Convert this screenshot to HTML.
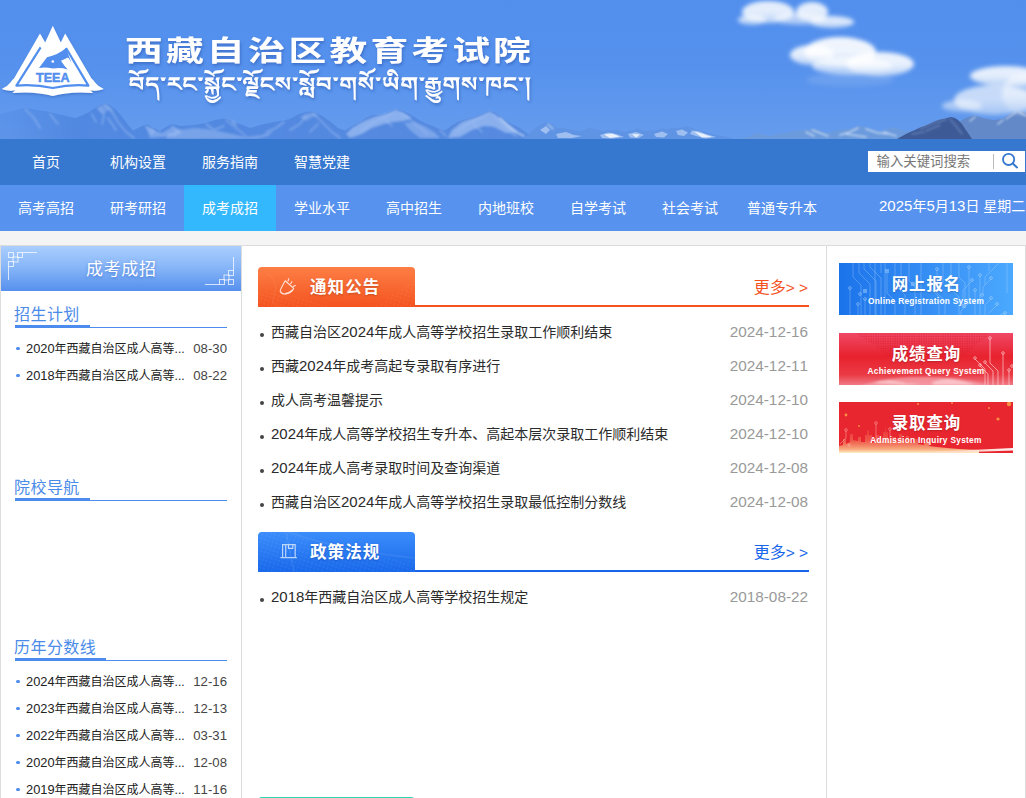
<!DOCTYPE html>
<html lang="zh-CN">
<head>
<meta charset="utf-8">
<title>成考成招 - 西藏自治区教育考试院</title>
<style>
*{margin:0;padding:0;box-sizing:border-box;}
html,body{width:1026px;height:798px;overflow:hidden;background:#f4f4f4;}
body{font-family:"Liberation Sans","Noto Sans CJK SC",sans-serif;font-size:14px;color:#222;position:relative;}
a{color:inherit;text-decoration:none;}
ul{list-style:none;}
/* banner */
#banner{position:absolute;left:0;top:0;width:1026px;height:139px;background:#528fed;overflow:hidden;}
#banner svg.bg{position:absolute;left:0;top:0;}
#logo{position:absolute;left:0;top:0;}
#ttl{position:absolute;left:120px;top:22px;}
#title{position:absolute;left:126px;top:27px;height:40px;line-height:40px;font-size:31px;font-weight:700;color:#fff;letter-spacing:9.5px;white-space:nowrap;font-family:"Liberation Serif","Noto Serif CJK SC",serif;text-shadow:1px 2px 3px rgba(40,80,160,.55);transform-origin:0 50%;}
#tib{position:absolute;left:128px;top:66px;height:34px;line-height:34px;font-size:24px;color:#fff;white-space:nowrap;font-family:"Liberation Sans","Noto Serif Tibetan","Jomolhari",sans-serif;text-shadow:1px 2px 3px rgba(40,80,160,.5);transform-origin:0 50%;}
/* nav */
#nav1{position:absolute;left:0;top:139px;width:1026px;height:46px;background:#3678d0;}
#nav2{position:absolute;left:0;top:185px;width:1026px;height:46px;background:#5692ee;}
.nav a{float:left;width:92px;height:46px;line-height:46px;text-align:center;color:#fff;font-size:14px;}
#nav2 a.on{background:#33b8fd;}
#search{position:absolute;left:868px;top:12px;width:157px;height:21px;background:#fff;}
#search span{position:absolute;left:8.5px;top:0;line-height:22px;font-size:13.4px;color:#777;}
#search i{position:absolute;left:125px;top:3px;width:1px;height:15px;background:#bbb;}
#search svg{position:absolute;left:131px;top:0;}
#date{position:absolute;left:879px;top:0;line-height:42px;font-size:14px;color:#fff;white-space:nowrap;}
#date .n{font-size:15px;}
/* columns */
#left{position:absolute;left:0;top:245px;width:242px;height:560px;background:#fff;border:1px solid #dcdcdc;border-bottom:0;}
#mid{position:absolute;left:242px;top:245px;width:585px;height:560px;background:#fff;border-right:1px solid #dcdcdc;border-top:1px solid #dcdcdc;}
#right{position:absolute;left:827px;top:245px;width:199px;height:560px;background:#fff;border-top:1px solid #dcdcdc;border-right:1px solid #dcdcdc;}

/* left */
#lhead{position:absolute;left:0;top:0;width:240px;height:45px;background:linear-gradient(#aacefe,#89b7f8 45%,#5690ee);text-align:center;line-height:47px;font-size:17px;color:#fff;text-shadow:0 1px 3px rgba(40,90,190,.55);letter-spacing:.6px;text-indent:.6px;}
#lhead svg{position:absolute;left:0;top:0;}
#lhead span{position:relative;}
.lsec{position:absolute;left:14px;width:212px;}
.lsec h3{height:23px;border-bottom:1px solid #4c8cee;font-weight:400;font-size:16px;line-height:19px;color:#4b8be8;position:relative;letter-spacing:.45px;}
.lsec h3 span{display:inline-block;text-indent:-1px;height:23px;border-bottom:3px solid #4c8cee;padding-right:10px;}
.lsec li{height:27px;line-height:27px;font-size:12px;color:#222;position:relative;padding-left:11px;white-space:nowrap;}
.lsec li:before{content:"";position:absolute;left:1.2px;top:11.8px;width:3.6px;height:3.6px;border-radius:50%;background:#4c8cee;}
.lsec li b{font-weight:400;position:absolute;right:0;top:0;color:#444;font-size:13.2px;}
.n{font-size:1.07em;font-kerning:none;}
/* mid */
.sec{position:absolute;left:16px;width:551px;}
.sec .hd{height:40px;border-bottom:2px solid;position:relative;}
.sec .tab{position:absolute;left:0;top:0;width:157px;height:40px;border-radius:4px 4px 0 0;color:#fff;font-weight:700;font-size:16.5px;line-height:40px;padding-left:52px;letter-spacing:1.1px;text-shadow:0 1px 2px rgba(120,40,0,.35);overflow:hidden;}
.sec .tab svg{position:absolute;left:0;top:0;}
.sec .tab span{position:relative;}
.sec .more{position:absolute;right:1px;top:11px;white-space:nowrap;font-size:16px;line-height:20px;}
.sec .more i{font-style:normal;letter-spacing:4.2px;font-size:15.5px;margin-left:0;margin-right:-4.2px;}
.sec ul{padding-top:8px;}
.sec li{height:34px;line-height:34px;font-size:14px;color:#2b2b2b;position:relative;padding-left:13px;white-space:nowrap;}
.sec li:before{content:"";position:absolute;left:2px;top:18px;width:4px;height:4px;border-radius:50%;background:#444;}
.sec li b{font-weight:400;position:absolute;right:1px;top:0;color:#999;font-size:15.3px;font-kerning:none;}
.or .hd{border-color:#f4511e;} .or .tab{background:linear-gradient(#fd7e45,#f4531f);} .or .more{color:#f4511e;}
.bl .hd{border-color:#1766ea;} .bl .tab{background:linear-gradient(#3c8dfb,#1868ea);text-shadow:0 1px 2px rgba(0,40,140,.4);} .bl .more{color:#1766ea;}
.gr .tab{background:#2fd6b5;}
/* right */
.btn{position:absolute;left:12px;width:174px;height:52px;overflow:hidden;color:#fff;text-align:center;}
.btn svg{position:absolute;left:0;top:0;}
.btn p{position:relative;font-weight:700;font-size:16.5px;line-height:20px;padding-top:11px;letter-spacing:.9px;text-indent:.9px;text-shadow:0 1px 2px rgba(0,0,0,.2);}
.btn span{position:relative;display:block;font-weight:700;font-size:8.3px;line-height:10px;margin-top:2px;letter-spacing:.3px;white-space:nowrap;}
</style>
</head>
<body>
<div id="banner">
<svg class="bg" width="1026" height="139" viewBox="0 0 1026 139">
<defs>
<linearGradient id="sky" x1="0" y1="0" x2="0" y2="1"><stop offset="0" stop-color="#528fed"/><stop offset=".45" stop-color="#5591ed"/><stop offset=".8" stop-color="#5f98ed"/><stop offset="1" stop-color="#669ced"/></linearGradient>
<linearGradient id="lm" x1="0" y1="0" x2="1" y2="0"><stop offset="0" stop-color="#5189e2" stop-opacity=".35"/><stop offset=".14" stop-color="#4d84dd" stop-opacity=".8"/><stop offset="1" stop-color="#5689df" stop-opacity=".95"/></linearGradient>
<linearGradient id="cg" x1="0" y1="0" x2="0" y2="1"><stop offset="0" stop-color="#fff"/><stop offset=".5" stop-color="#fdfeff"/><stop offset="1" stop-color="#c4d9f7"/></linearGradient>
<filter id="b1" x="-20%" y="-40%" width="140%" height="180%"><feGaussianBlur stdDeviation="2.2"/></filter>
<filter id="b2" x="-5%" y="-20%" width="110%" height="140%"><feGaussianBlur stdDeviation="0.6"/></filter>
<filter id="b4" x="-5%" y="-20%" width="110%" height="140%"><feGaussianBlur stdDeviation="1.1"/></filter>
</defs>
<rect width="1026" height="139" fill="url(#sky)"/>
<g filter="url(#b2)">
<path d="M0 139 L0 114 L12 111 L25 107.7 L38 110 L50 112 L62 115 L75 118 L83 115 L90 111.5 L98 106 L105 102.7 L110 105 L115 109 L120 114 L125 120.4 L129 126 L133 130.5 L140 127 L147 124 L154 128 L160 131 L166 127 L172 124 L181 126 L190 125.5 L198 124.5 L205 123 L215 120 L225 118.4 L232 121 L240 124 L250 128 L262 124.5 L275 121.7 L283 120.5 L290 119 L297 115 L303 112.8 L308 111.7 L313 111.5 L319 114 L325 118 L332 123 L338 128 L345 130.5 L352 126 L360 121.7 L366 118 L372 115.3 L378 114.8 L385 114 L391 111 L397 109 L403 111 L410 114 L416 118 L422 121.7 L430 125 L437 128 L445 130.5 L451 126 L458 121.7 L464 119.5 L470 118 L476 116 L482 114 L486 112 L490 110.8 L495 112.5 L500 116 L505 119.5 L510 123 L515 125.5 L520 128 L524 131 L528 134.3 L533 139 Z" fill="url(#lm)"/>
<path d="M524 139 L528 134.3 L533 130 L537 127 L541 124.5 L545 122.6 L549 122.4 L553 124.5 L556 127.5 L560 128.5 L564 127.5 L567 129 L572 129.5 L576 131 L580 131.8 L584 130 L588 128.3 L591 127.6 L594 129 L598 129.8 L601 131 L605 131 L609 129.8 L613 130.4 L617 129.6 L621 131.2 L626 132 L630 130.8 L634 130 L637 128 L639 129.3 L643 130.5 L647 131.2 L651 130.2 L655 130.6 L659 129 L663 128.2 L667 129.4 L671 128.2 L675 127.4 L679 128.2 L683 127 L687 126.6 L691 127.6 L695 129 L699 130.2 L704 131.8 L709 133 L714 134.2 L720 135.8 L726 136.8 L730 137.8 L735 139 Z" fill="#5f93e4"/>
<path d="M738 139 L747 137.4 L752 135 L757 133 L763 134.5 L770 136 L778 134 L785 133 L792 131.5 L800 130 L808 129.2 L815 128.7 L821 131 L827 133 L833 131.5 L838 130 L844 129.2 L850 128.7 L855 127 L860 125.7 L865 127 L870 128.7 L875 130 L880 131.6 L887 129 L893 127 L897 128.5 L905 131 L1026 131 L1026 139 Z" fill="#6c9bdd"/>
<path d="M955 139 L955 123 L960 121.3 L964 119 L968 117 L972 116 L975 115.5 L980 117 L985 118.4 L990 119.5 L995 120 L999 119.2 L1003 118.4 L1007 116 L1010 114 L1014 112 L1017 110.5 L1021 111.2 L1026 112.6 L1026 139 Z" fill="#6489c8"/>
<path d="M897 139 L905 134.5 L910 132 L915 130 L920 127.5 L925 125.7 L930 123.5 L935 121.3 L940 119.5 L945 118.4 L951 117 L955 118 L958 120 L962 124 L965 128.7 L968 133 L972 139 Z" fill="#3c5a97"/>
</g>
<g filter="url(#b4)" fill="#a9c6f6" fill-opacity=".62">
<path d="M168 134 L180 130 L194 128 L206 129 L218 131 L232 134 L246 137 L262 135 L274 130 L268 136 L256 139 H166Z" fill-opacity=".42"/><path d="M230 120 L234 121 L238 126 L234 125Z M150 126 L156 132 L152 133Z" fill-opacity=".5"/>
<path d="M146 126 L154 130 L162 133 L172 127 L182 130 L176 136 L150 138Z" fill-opacity=".45"/>
<path d="M352 128 L362 122 L374 117 L388 113 L396 110.5 L404 113 L412 118 L404 121 L394 122 L384 124 L372 128 L362 134 L350 138 L346 134Z"/>
<path d="M404 123 L414 122 L424 126 L434 132 L440 138 L420 138 L410 130Z" fill-opacity=".45"/>
<path d="M452 130 L462 122 L474 118 L484 114.5 L490 112 L496 115 L504 121 L512 127 L518 132 L506 133 L494 127 L484 126 L472 130 L460 137 L448 138Z"/>
<path d="M300 117 L308 113.5 L314 113 L318 116 L312 117 L306 121Z" fill-opacity=".4"/>
<path d="M96 108 L104 104 L110 107 L114 112 L108 110 L104 114 L100 112Z" fill-opacity=".35"/>
</g>
<g filter="url(#b2)" fill="#d4e3fa" fill-opacity=".8"><path d="M556 134 L566 132 L574 135 L582 136 L572 138 L558 138Z M600 135 L608 132.5 L616 134 L624 137 L612 138.5 L602 138Z M628 134 L636 132 L644 135 L638 138 L630 137.5Z M654 134 L662 131.5 L668 134 L664 137.5 L656 137Z M676 131 L682 129.5 L688 132.5 L684 136 L678 135Z M692 130.5 L698 131 L706 134 L716 137 L706 138.5 L696 136 L690 134Z M540 130 L546 126 L550 130 L546 134Z" fill-opacity=".55"/><path d="M604 134.5 L612 133.5 L620 136.5 L610 138Z M694 131.5 L702 133.5 L712 137 L702 137.5Z M632 134 L640 134.5 L636 137.5Z" fill="#f0f6fe" fill-opacity=".9"/></g>
<g filter="url(#b4)" fill="none" stroke-linecap="round">
<g stroke="#9dbef4" stroke-opacity=".55" stroke-width="1.6">
<path d="M105 104 L112 112 L118 122 L126 132 L134 138M100 108 L104 116 L102 124M108 118 L116 130M92 114 L96 122M25 109 L34 118 L40 128M50 114 L58 124M146 126 L152 134M172 126 L180 134M206 124 L214 130 L224 126M226 120 L236 128 L246 136"/>
<path d="M313 113 L322 122 L332 132 L340 138M306 116 L300 124 L290 130M318 124 L310 132M284 122 L276 128 L266 132M397 110 L388 116 L374 122 L362 130M399 112 L408 118 L418 126 L428 134M384 118 L392 126M490 112 L480 118 L468 124 L456 132M492 114 L500 122 L508 130 L516 136M474 124 L482 132M440 130 L446 136"/>
</g>
<g stroke="#dbe8fb" stroke-opacity=".7" stroke-width="1.5">
<path d="M500 118 L508 126 L516 132 L524 136M548 124.5 L553 129"/>
<path d="M812 130 L820 133 L828 136M806 132 L814 136M858 128 L850 132 L840 135M866 129 L878 133 L890 134M884 132 L896 136M846 134 L866 137"/>
<path d="M1017 111 L1012 115 L1006 119M1019 112 L1026 116M975 117 L970 121M1003 120 L998 124"/>
</g>
<path d="M920 129 L934 123 L946 119.5M926 131 L940 125M950 119 L956 126 L962 134M912 134 L924 132" stroke="#7f9acb" stroke-opacity=".55" stroke-width="1.4"/>
</g>
<g filter="url(#b1)" fill="url(#cg)">
<ellipse cx="768" cy="12" rx="26" ry="11" opacity=".85"/>
<ellipse cx="752" cy="20" rx="14" ry="5" opacity=".7"/>
<ellipse cx="812" cy="12" rx="16" ry="10" opacity=".85"/>
<ellipse cx="832" cy="22" rx="22" ry="6" opacity=".8"/>
<ellipse cx="800" cy="19" rx="26" ry="6" opacity=".6"/>
<ellipse cx="840" cy="52" rx="36" ry="15" opacity=".92"/>
<ellipse cx="812" cy="55" rx="22" ry="10" opacity=".85"/>
<ellipse cx="880" cy="64" rx="34" ry="12" opacity=".88"/>
<ellipse cx="852" cy="66" rx="40" ry="9" opacity=".7"/>
<ellipse cx="850" cy="80" rx="44" ry="7" opacity=".12"/>
<ellipse cx="1006" cy="76" rx="36" ry="10" opacity=".85"/>
<ellipse cx="994" cy="100" rx="40" ry="15" opacity=".66"/>
<ellipse cx="962" cy="106" rx="20" ry="6" opacity=".5"/>
<ellipse cx="1022" cy="94" rx="20" ry="20" opacity=".5"/>
</g>
</svg>
<svg id="logo" width="110" height="105" viewBox="0 0 110 105">
<defs><filter id="ls" x="-10%" y="-10%" width="120%" height="130%"><feDropShadow dx="0.5" dy="1.5" stdDeviation="1.2" flood-color="#2d5fb8" flood-opacity=".55"/></filter></defs>
<g filter="url(#ls)">
<path d="M1.7 89 Q7 87 10.5 82.5 Q12 80 14 78.5 L40 33.6 L45.2 42.5 L52.8 25.7 L60.8 42.5 L65.2 33.6 L91.5 78.5 Q93.5 80 95 82.5 Q98.5 87 103.8 89 Q98 91.4 92.5 90.6 L13 90.6 Q7.5 91.4 1.7 89 Z" fill="#fff"/>
<path d="M12.4 93 L17.5 88.2 Q36 86.4 52.8 90.2 Q70 86.4 88 88.2 L93.2 93 Q70 91 52.8 96 Q35 91 12.4 93 Z" fill="#fff"/>
</g>
<path d="M40.6 47.4 L16.4 85.6 Q35 84.2 52.8 88 Q70 84.2 88.4 85.6 L66 48" fill="none" stroke="#518eed" stroke-width="2.2" stroke-linejoin="round"/>
<path d="M66 48 Q58 55 47 57.2 L39 68 Q46 67 52.8 68.6 Q60 67 67.6 69.4 L61.5 61.5 L68.5 58 L71.5 63 Z" fill="#518eed"/>
<path d="M61 60.8 L68 57.4 L71.5 63.5 L66 67.5 Z" fill="#fff"/>
<circle cx="52.8" cy="61.5" r="1.3" fill="#fff"/>
<text x="36" y="81.6" textLength="33.5" lengthAdjust="spacingAndGlyphs" font-family="'Liberation Sans',sans-serif" font-weight="700" font-size="12" fill="#518eed" stroke="#518eed" stroke-width=".45">TEEA</text>
</svg>
<svg id="ttl" width="430" height="90" viewBox="0 0 430 90">
<defs><filter id="ts" x="-5%" y="-20%" width="110%" height="150%"><feDropShadow dx="1" dy="2" stdDeviation="1.5" flood-color="#2a58b0" flood-opacity=".6"/></filter></defs>
<g filter="url(#ts)" fill="#fff">
<text x="5" y="39" textLength="409" lengthAdjust="spacingAndGlyphs" letter-spacing="2.4" font-family="'Liberation Sans','Noto Sans CJK SC',sans-serif" font-weight="700" font-size="28.5">西藏自治区教育考试院</text>
<text x="8.5" y="69" textLength="403" lengthAdjust="spacingAndGlyphs" font-family="'Liberation Sans','Noto Serif Tibetan','Jomolhari',sans-serif" font-weight="700" font-size="20">བོད་རང་སྐྱོང་ལྗོངས་སློབ་གསོ་ཡིག་རྒྱུགས་ཁང་།</text>
</g>
</svg>
</div>
<div id="nav1" class="nav">
  <a>首页</a><a>机构设置</a><a>服务指南</a><a>智慧党建</a>
  <div id="search"><span>输入关键词搜索</span><i></i>
    <svg width="22" height="20" viewBox="0 0 22 20"><circle cx="9.6" cy="8.4" r="5.6" fill="none" stroke="#3678d0" stroke-width="1.8"/><path d="M13.8 12.6 L18 16.4" stroke="#3678d0" stroke-width="2" stroke-linecap="round"/></svg>
  </div>
</div>
<div id="nav2" class="nav">
  <a>高考高招</a><a>研考研招</a><a class="on">成考成招</a><a>学业水平</a><a>高中招生</a><a>内地班校</a><a>自学考试</a><a>社会考试</a><a>普通专升本</a>
  <div id="date"><span class="n">2025</span>年<span class="n">5</span>月<span class="n">13</span>日 星期二</div>
</div>
<div id="left">
  <div id="lhead"><svg width="240" height="45" viewBox="0 1 240 45"><g id="orn" fill="none" stroke="#fff" stroke-opacity=".72" stroke-width="1"><rect x="7.5" y="7.5" width="5" height="5"/><rect x="16.5" y="7.5" width="5" height="5"/><rect x="12" y="12" width="5" height="5"/><rect x="7.5" y="16.5" width="5" height="5"/><path d="M21.5 7.5H36M7.5 21.5V35"/></g><use href="#orn" transform="rotate(180 120 23.5)"/></svg><span>成考成招</span></div>
  <div class="lsec" style="top:59px"><h3><span>招生计划</span></h3>
    <ul style="padding-top:7px"><li><span class="n">2020</span>年西藏自治区成人高等...<b class="n">08-30</b></li><li><span class="n">2018</span>年西藏自治区成人高等...<b class="n">08-22</b></li></ul>
  </div>
  <div class="lsec" style="top:232px"><h3><span>院校导航</span></h3></div>
  <div class="lsec" style="top:392px"><h3><span>历年分数线</span></h3>
    <ul style="padding-top:7px"><li><span class="n">2024</span>年西藏自治区成人高等...<b class="n">12-16</b></li><li><span class="n">2023</span>年西藏自治区成人高等...<b class="n">12-13</b></li><li><span class="n">2022</span>年西藏自治区成人高等...<b class="n">03-31</b></li><li><span class="n">2020</span>年西藏自治区成人高等...<b class="n">12-08</b></li><li><span class="n">2019</span>年西藏自治区成人高等...<b class="n">11-16</b></li></ul>
  </div>
</div>
<div id="mid">
  <div class="sec or" style="top:21px">
    <div class="hd"><div class="tab"><svg width="157" height="40" viewBox="0 0 157 40"><defs><pattern id="dpo" width="4" height="4" patternUnits="userSpaceOnUse" patternTransform="rotate(18)"><circle cx="1" cy="1" r=".55" fill="#fff" fill-opacity=".22"/></pattern></defs><path d="M0 24 Q30 26 52 34 T90 40 H0Z" fill="url(#dpo)"/><path d="M157 14 Q140 22 128 32 T104 40 H157Z" fill="url(#dpo)"/><path d="M8 6 Q22 14 16 28 T30 40" fill="none" stroke="#fff" stroke-opacity=".07" stroke-width="1"/><g fill="none" stroke="#fff" stroke-opacity=".8" stroke-width="1.15" stroke-linecap="round" stroke-linejoin="round"><path d="M27.2 13.8 L35.7 21.4 Q33.6 25.4 28.6 26.8 Q24 27.7 22.2 24.4 Q21.8 23.2 27.2 13.8 Z"/><path d="M30 14 L30.8 11.7 M32.7 16.7 L33.9 14.7 M35.1 19.5 L37.3 18.4"/><path d="M27.5 26.6 Q31.5 26.2 34 23.4" stroke-width="1.8" stroke-opacity=".55"/></g></svg><span>通知公告</span></div><a class="more">更多<i>&gt;&gt;</i></a></div>
    <ul>
      <li>西藏自治区<span class="n">2024</span>年成人高等学校招生录取工作顺利结束<b>2024-12-16</b></li>
      <li>西藏<span class="n">2024</span>年成考高起专录取有序进行<b>2024-12-11</b></li>
      <li>成人高考温馨提示<b>2024-12-10</b></li>
      <li><span class="n">2024</span>年成人高等学校招生专升本、高起本层次录取工作顺利结束<b>2024-12-10</b></li>
      <li><span class="n">2024</span>年成人高考录取时间及查询渠道<b>2024-12-08</b></li>
      <li>西藏自治区<span class="n">2024</span>年成人高等学校招生录取最低控制分数线<b>2024-12-08</b></li>
    </ul>
  </div>
  <div class="sec bl" style="top:286px">
    <div class="hd"><div class="tab"><svg width="157" height="40" viewBox="0 0 157 40"><defs><pattern id="dpb" width="4" height="4" patternUnits="userSpaceOnUse" patternTransform="rotate(18)"><circle cx="1" cy="1" r=".55" fill="#fff" fill-opacity=".22"/></pattern></defs><path d="M0 0 H40 Q60 20 90 22 T157 30 V40 H0Z" fill="url(#dpb)"/><path d="M28 0 L36 40 M30 0 Q80 18 157 26" fill="none" stroke="#fff" stroke-opacity=".08" stroke-width="1.5"/><g fill="none" stroke="#fff" stroke-opacity=".68" stroke-width="1.2"><path d="M24.6 25.6 V12.6 H37.2 V25.6 M22.4 25.6 H38.8 M27.7 12.6 V25.6 M30.5 12.6 V16.4 H34.8 V12.6"/></g></svg><span>政策法规</span></div><a class="more">更多<i>&gt;&gt;</i></a></div>
    <ul>
      <li><span class="n">2018</span>年西藏自治区成人高等学校招生规定<b>2018-08-22</b></li>
    </ul>
  </div>
  <div class="sec gr" style="top:551px">
    <div class="hd" style="border:0"><div class="tab"></div></div>
  </div>
</div>
<div id="right">
  <a class="btn" style="top:17px;background:linear-gradient(90deg,#1b73ea,#3a93f6 60%,#4ba9fe)"><svg width="174" height="52" viewBox="0 0 174 52"><g fill="none" stroke="#bfe0ff" stroke-opacity=".34" stroke-width=".9"><path d="M11 52V26M14 0V14l8 8v30M19 52V42M20 0V10l11 11v31M25 0V6l12 12v34M26 36V52M31 0V4l11 11v37M36 0V52M42 0V10M46 0V52M48 10V30l8 8v14M56 0V22l10 10v20M62 0V14M70 0V18l6 6v28M82 0V52M90 24l10 10v18M98 7V30l8 8v14M104 0V20M112 0V26l8 8v18M120 0V14l6 6v23M130 5V40l-8 8v4M136 28V52M141 13V52M133 18l-9 9v10M152 16l-8 8v8M152 36l-6 6v10M158 42l-8 8M166 50l-5 2M160 0l-14 14V22M150 0V8M168 0V30"/><g fill="#9fd0ff" fill-opacity=".5" stroke="none"><rect x="46" y="6" width="4" height="4"/><rect x="24" y="26" width="4" height="4"/><rect x="72" y="19" width="4" height="4"/><rect x="123" y="41" width="4" height="4"/></g><g stroke-opacity=".5"><circle cx="11" cy="25" r="1.4"/><circle cx="21" cy="31" r="1.4"/><circle cx="26" cy="36" r="1.4"/><circle cx="19" cy="41" r="1.4"/><circle cx="98" cy="6" r="1.4"/><circle cx="130" cy="4" r="1.4"/><circle cx="141" cy="12" r="1.4"/><circle cx="133" cy="17" r="1.4"/><circle cx="152" cy="15" r="1.4"/><circle cx="136" cy="27" r="1.4"/><circle cx="143" cy="32" r="1.4"/><circle cx="152" cy="35" r="1.4"/><circle cx="158" cy="41" r="1.4"/><circle cx="166" cy="50" r="1.4"/></g></g></svg><p>网上报名</p><span>Online Registration System</span></a>
  <a class="btn" style="top:87px;background:linear-gradient(#ef4866,#e8222e 45%,#ea3a44 80%,#f07a86)"><svg width="174" height="52" viewBox="0 0 174 52"><defs><pattern id="dpr" width="2.4" height="2.4" patternUnits="userSpaceOnUse"><circle cx="1" cy="1" r=".7" fill="#d8101c" fill-opacity=".55"/></pattern><filter id="gb" x="-10%" y="-50%" width="120%" height="200%"><feGaussianBlur stdDeviation="1"/></filter></defs>
<path d="M18 0 H150 L146 6 L138 10 L132 18 L124 22 L118 16 L110 20 L104 14 L96 18 L86 12 L78 18 L70 24 L60 20 L52 26 L44 20 L36 12 L28 8 L22 4 Z" fill="url(#dpr)"/>
<g filter="url(#gb)"><ellipse cx="86" cy="62" rx="74" ry="18" fill="#f6a3ab" fill-opacity=".7"/><path d="M34 50 Q44 46 56 48 T72 52 Z M92 50 Q104 44 118 47 T136 52 H96 Z M60 52 Q70 49 82 51" fill="#fbd3d6" fill-opacity=".75"/></g>
<g fill="none" stroke="#ffd9dc" stroke-opacity=".7" stroke-width=".9"><path d="M151 6V30l8 8v14M164 21V52M136 26l10 10v16M146 30l8 8v14M141 33l8 8v11M170 38V52"/><circle cx="151" cy="5" r="1.3"/><circle cx="164" cy="20" r="1.3"/><circle cx="136" cy="25" r="1.3"/><circle cx="146" cy="29" r="1.3"/><circle cx="141" cy="32" r="1.3"/><circle cx="170" cy="37" r="1.3"/><circle cx="173" cy="33" r="1.3"/></g></svg><p>成绩查询</p><span>Achievement Query System</span></a>
  <a class="btn" style="top:156px;height:51px;background:#e8262f"><svg width="174" height="51" viewBox="0 0 174 51"><defs><linearGradient id="sk" x1="0" y1="0" x2="0" y2="1"><stop offset="0" stop-color="#f79a6a" stop-opacity=".05"/><stop offset=".55" stop-color="#f9a876" stop-opacity=".4"/><stop offset=".85" stop-color="#fcc890" stop-opacity=".8"/><stop offset="1" stop-color="#fff0c8" stop-opacity="1"/></linearGradient><linearGradient id="st" x1="0" y1="0" x2="1" y2="0"><stop offset="0" stop-color="#ffe9c0" stop-opacity=".9"/><stop offset=".5" stop-color="#ffd9c8" stop-opacity=".85"/><stop offset="1" stop-color="#fff" stop-opacity=".95"/></linearGradient><filter id="gb3" x="-10%" y="-50%" width="120%" height="200%"><feGaussianBlur stdDeviation=".7"/></filter></defs>
<g filter="url(#gb3)"><path d="M0 51V44l4-1v-6h3v5l4-2v-8h3v6l5 1v-4h3v5h4v-7h2v-5h2v5h3v8l4-1v-7h3v5l4 1v-9h2v-6h1v6h2v9l4 1v-5h4v5h3v-8h3v7l4 1v-6h3v6l5 1v-4h4v5l6 1v-3h5v4l8 1 10 1 12 1 20 1V51Z" fill="url(#sk)"/><path d="M70 51 Q120 48.5 174 46 V48.5 Q130 50 96 51Z" fill="url(#st)"/></g>
<g fill="none" stroke="#ffc9c0" stroke-opacity=".55" stroke-width=".8"><path d="M7 29V36l-6 6M37 22V40M51 28V42"/><circle cx="7" cy="28" r="1.3"/><circle cx="37" cy="21" r="1.3"/><circle cx="51" cy="27" r="1.3"/><circle cx="10" cy="43" r="1.2"/></g>
<g fill="#ffb347" fill-opacity=".75"><circle cx="170" cy="2" r="2.2"/><circle cx="159" cy="17" r="1.6"/><circle cx="150" cy="6" r="1"/><circle cx="7" cy="13" r="1.4"/><circle cx="79" cy="2" r="1"/><circle cx="113" cy="1" r=".9"/><circle cx="20" cy="24" r=".9"/></g></svg><p>录取查询</p><span>Admission Inquiry System</span></a>
</div>
</body>
</html>
